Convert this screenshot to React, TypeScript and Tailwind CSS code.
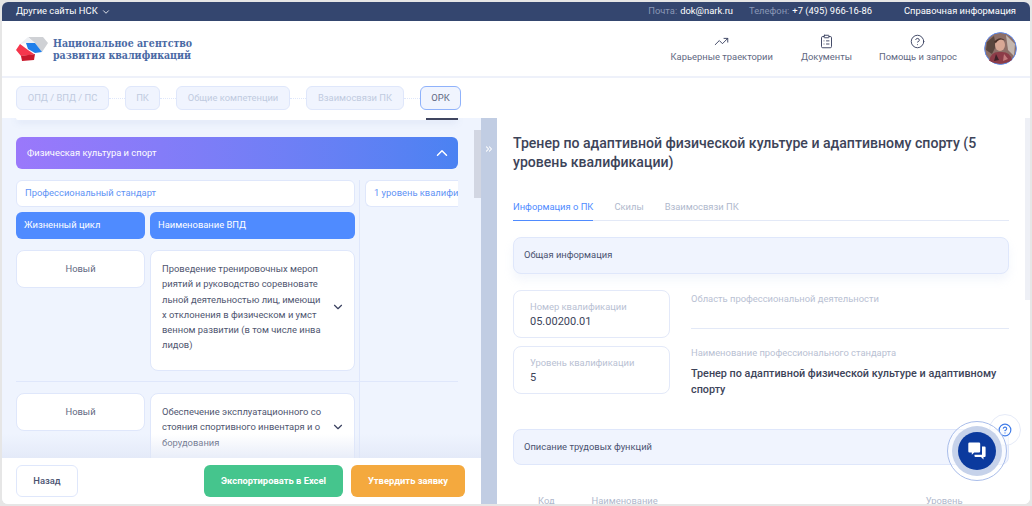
import { ChevronDown, ChevronUp, ChevronsRight, CircleHelp, ClipboardList, TrendingUp } from 'lucide-react'

const tabs = [
  { label: 'ОПД / ВПД / ПС', width: 'w-[93px]' },
  { label: 'ПК', width: 'w-[35px]' },
  { label: 'Общие компетенции', width: 'w-[114px]' },
  { label: 'Взаимосвязи ПК', width: 'w-[98px]' }
]

function Logo() {
  return (
    <svg width="32" height="26" viewBox="0 0 32 26">
      <polygon points="12,1 27,1 32,7 26,16 19,7" fill="#cfd1d5" />
      <polygon points="12,1 19,7 10,7 4,8" fill="#eef0f4" />
      <polygon points="10,7 19,7 26,16 19,17 12,13" fill="#1f7fea" />
      <polygon points="0,14 4,8 12,14 18,18 14,19 5,20" fill="#f5364c" />
      <polygon points="5,20 19,18 18,24 6,25" fill="#c9182c" />
    </svg>
  )
}

function Avatar() {
  return (
    <svg width="33" height="33" viewBox="0 0 33 33" className="rounded-full">
      <circle cx="16.5" cy="16.5" r="16" fill="#8d6f68" stroke="#5b8cf5" strokeWidth="1" />
      <path d="M22 3 L31 12 L30 24 L24 18 Z" fill="#c4b6ae" />
      <path d="M3 10 L10 4 L12 14 L8 22 L2 18 Z" fill="#5a463e" />
      <ellipse cx="16" cy="13" rx="5" ry="6" fill="#d8a896" />
      <path d="M10 10 Q16 3 22 9 L20 8 Q15 6 12 11 Z" fill="#4a3028" />
      <path d="M5 29 Q7 19 16 20 Q26 19 28 28 Q17 35 5 29 Z" fill="#8c3c48" />
      <path d="M12 22 L15 28 L10 29 Z" fill="#3e2228" />
      <path d="M20 22 L24 27 L19 29 Z" fill="#c27a7c" />
    </svg>
  )
}

function NavItem({ icon, label }: { icon: React.ReactNode; label: string }) {
  return (
    <div className="flex flex-col items-center gap-px text-[9.4px] leading-[14px] text-[#5f6882]">
      <span className="text-[#3a4160]">{icon}</span>
      <span>{label}</span>
    </div>
  )
}

function VpdRow({ text, rowHeight }: { text: string[]; rowHeight: string }) {
  return (
    <div className="flex gap-[5px]">
      <div className="w-[129px] h-[38px] shrink-0 bg-white border border-[#dfe7fb] rounded-lg flex items-center justify-center text-[9.4px] text-[#5f6882]">
        Новый
      </div>
      <div className={`w-[205px] ${rowHeight} shrink-0 bg-white border border-[#dfe7fb] rounded-lg pl-[11px] pr-[9px] pt-[10px]`}>
        <div className="flex items-center justify-between">
          <div className="text-[9.4px] leading-[15.3px] text-[#4f5670]">
            {text.map((line) => (
              <div key={line} className="whitespace-nowrap">{line}</div>
            ))}
          </div>
          <ChevronDown className="w-[14px] h-[14px] text-[#3a4160] shrink-0" />
        </div>
      </div>
    </div>
  )
}

export default function App() {
  return (
    <div className="w-[1032px] h-[506px] bg-[#e6e6e6] p-[2px] overflow-hidden" style={{ fontFamily: 'Roboto, sans-serif' }}>
      <div className="relative w-[1028px] h-[502px] bg-white rounded-[6px] overflow-hidden flex flex-col">
        {/* top strip */}
        <div className="h-[19px] shrink-0 bg-[#34466f] flex items-center pl-[14px] pr-[14px] text-[9.4px] text-white">
          <span>Другие сайты НСК</span>
          <ChevronDown className="w-[10px] h-[10px] ml-[3px]" />
          <span className="ml-auto text-[#8a97b5]">Почта:</span>
          <span className="ml-[3px]">dok@nark.ru</span>
          <span className="ml-[16px] text-[#8a97b5]">Телефон:</span>
          <span className="ml-[3px]">+7 (495) 966-16-86</span>
          <span className="ml-[32px]">Справочная информация</span>
        </div>

        {/* header */}
        <div className="h-[57px] shrink-0 bg-white border-b-2 border-[#eef1fa] flex items-center pl-[14px] pr-[13px]">
          <Logo />
          <div className="ml-[5px] text-[10.5px] leading-[12px] font-bold text-[#4a6aa5]" style={{ fontFamily: '"DejaVu Serif Condensed", "DejaVu Serif", serif' }}>
            <div>Национальное агентство</div>
            <div>развития квалификаций</div>
          </div>
          <div className="ml-auto flex items-center">
            <NavItem icon={<TrendingUp className="w-[15px] h-[15px]" strokeWidth={1.5} />} label="Карьерные траектории" />
            <div className="ml-[28px]">
              <NavItem icon={<ClipboardList className="w-[15px] h-[15px]" strokeWidth={1.5} />} label="Документы" />
            </div>
            <div className="ml-[27px]">
              <NavItem icon={<CircleHelp className="w-[15px] h-[15px]" strokeWidth={1.5} />} label="Помощь и запрос" />
            </div>
            <div className="ml-[27px]">
              <Avatar />
            </div>
          </div>
        </div>

        {/* steps */}
        <div className="h-[40px] shrink-0 bg-white flex items-center pl-[14px]">
          {tabs.map((tab) => (
            <div key={tab.label} className="flex items-center">
              <div className={`${tab.width} h-[24px] bg-[#f0f4fe] border border-[#dfe7fb] rounded-md flex items-center justify-center text-[9.4px] text-[#c0cbe0] whitespace-nowrap`}>
                {tab.label}
              </div>
              <div className="w-[16px] border-t border-dotted border-[#dfe7fb]" />
            </div>
          ))}
          <div className="w-[41px] h-[24px] bg-[#f0f4fe] border border-[#8fb2fb] rounded-md flex items-center justify-center text-[9.4px] text-[#5f6882]">
            ОРК
          </div>
        </div>

        {/* body */}
        <div className="flex-1 flex min-h-0">
          {/* left panel */}
          <div className="w-[479px] shrink-0 flex flex-col bg-[#eff4fe]">
            <div className="relative flex-1 min-h-0 overflow-hidden pl-[14px]">
              <div className="w-[442px] h-[2px] bg-white rounded-b-md shadow-[0_2px_6px_rgba(120,140,190,0.25)] relative">
                <div className="absolute right-0 top-0 w-[32px] h-[2px] bg-[#3f4560]" />
              </div>
              <div className="absolute right-0 top-[12px] w-[7px] h-[68px] bg-[#d2d6e2]" />

              <div className="mt-[17px] w-[442px] h-[32px] rounded-md bg-gradient-to-r from-[#9a78fb] to-[#4a82f2] flex items-center justify-between pl-[11px] pr-[7px] text-[9.4px] text-white">
                <span>Физическая культура и спорт</span>
                <ChevronUp className="w-[18px] h-[18px]" strokeWidth={2} />
              </div>

              <div className="mt-[11px] w-[442px] flex">
                <div className="w-[339px] shrink-0">
                  <div className="h-[27px] bg-white border border-[#dfe7fb] rounded-md flex items-center pl-[8px] text-[9.4px] text-[#5f93f5]">
                    Профессиональный стандарт
                  </div>
                  <div className="mt-[5px] flex gap-[5px]">
                    <div className="w-[129px] h-[27px] bg-[#4f8bff] rounded-md flex items-center pl-[8px] text-[9.4px] text-white">Жизненный цикл</div>
                    <div className="w-[205px] h-[27px] bg-[#4f8bff] rounded-md flex items-center pl-[8px] text-[9.4px] text-white">Наименование ВПД</div>
                  </div>
                  <div className="mt-[11px]">
                    <VpdRow
                      rowHeight="h-[121px]"
                      text={[
                        'Проведение тренировочных мероп',
                        'риятий и руководство соревновате',
                        'льной деятельностью лиц, имеющи',
                        'х отклонения в физическом и умст',
                        'венном развитии (в том числе инва',
                        'лидов)'
                      ]}
                    />
                  </div>
                  <div className="mt-[10px] h-px w-[442px] bg-[#dfe7fb]" />
                  <div className="mt-[11px]">
                    <VpdRow
                      rowHeight="h-[90px]"
                      text={['Обеспечение эксплуатационного со', 'стояния спортивного инвентаря и о', 'борудования']}
                    />
                  </div>
                </div>
                <div className="w-px h-[320px] ml-[4px] shrink-0 bg-[#dfe7fb]" />
                <div className="ml-[5px] w-[93px] h-[27px] overflow-hidden bg-white border border-r-0 border-[#dfe7fb] rounded-l-md flex items-center pl-[8px] text-[9.4px] text-[#5f93f5] whitespace-nowrap">
                  1 уровень квалификации
                </div>
              </div>

              <div className="absolute left-0 right-0 bottom-0 h-[24px] bg-gradient-to-b from-transparent to-[#dfe6f6]/70" />
            </div>

            <div className="h-[46px] shrink-0 bg-white flex items-center pl-[14px] pr-[16px]">
              <div className="w-[62px] h-[32px] border border-[#dfe7fb] rounded-md flex items-center justify-center text-[9.4px] font-medium text-[#4a5270]">
                Назад
              </div>
              <div className="ml-auto w-[139px] h-[32px] rounded-md bg-[#45c58d] flex items-center justify-center text-[9.4px] font-bold text-white">
                Экспортировать в Excel
              </div>
              <div className="ml-[8px] w-[114px] h-[32px] rounded-md bg-[#f4a93e] flex items-center justify-center text-[9.4px] font-bold text-white">
                Утвердить заявку
              </div>
            </div>
          </div>

          {/* splitter */}
          <div className="w-[16px] shrink-0 bg-[#c1cde3] pt-[26px] flex justify-center">
            <ChevronsRight className="w-[10px] h-[10px] text-white" strokeWidth={2.5} />
          </div>

          {/* right panel */}
          <div className="relative flex-1 min-w-0 overflow-hidden bg-white pl-[16px] pr-[21px] pt-[16px]">
            <div className="absolute right-0 top-0 w-[5px] h-[182px] bg-[#eef0f6]" />
            <h1 className="text-[14.1px] leading-[19px] font-medium text-[#3d4459]">
              Тренер по адаптивной физической культуре и адаптивному спорту (5 уровень квалификации)
            </h1>

            <div className="mt-[24px] h-[25px] border-b border-[#e3e9f7] flex gap-[21px] text-[9.4px] leading-[21px] text-[#b0b9cd]">
              <div className="h-[25px] border-b border-[#4f8bff] text-[#4f8bff]">Информация о ПК</div>
              <div>Скилы</div>
              <div>Взаимосвязи ПК</div>
            </div>

            <div className="mt-[16px] h-[37px] bg-[#f0f4fe] border border-[#dfe7fb] rounded-lg shadow-[0_6px_10px_rgba(190,205,240,0.18)] flex items-center pl-[10px] text-[9.4px] text-[#4a5270]">
              Общая информация
            </div>

            <div className="mt-[16px] flex gap-[21px]">
              <div className="w-[157px] shrink-0">
                <div className="h-[48px] border border-[#e3e9f9] rounded-lg pl-[16px] pt-[9px]">
                  <div className="text-[9.4px] leading-[14px] text-[#b9c1d3]">Номер квалификации</div>
                  <div className="text-[11px] leading-[16px] text-[#3d4459]">05.00200.01</div>
                </div>
                <div className="mt-[8px] h-[48px] border border-[#e3e9f9] rounded-lg pl-[16px] pt-[9px]">
                  <div className="text-[9.4px] leading-[14px] text-[#b9c1d3]">Уровень квалификации</div>
                  <div className="text-[11px] leading-[16px] text-[#3d4459]">5</div>
                </div>
              </div>
              <div className="flex-1 min-w-0">
                <div className="h-[39px] border-b border-[#e3e9f7] text-[9.4px] leading-[17px] text-[#b9c1d3]">
                  Область профессиональной деятельности
                </div>
                <div className="mt-[17px] text-[9.4px] leading-[14px] text-[#b9c1d3]">Наименование профессионального стандарта</div>
                <div className="mt-[6px] text-[10.8px] leading-[15.5px] font-medium text-[#3d4459]">
                  Тренер по адаптивной физической культуре и адаптивному спорту
                </div>
              </div>
            </div>

            <div className="mt-[32px] h-[36px] bg-[#f0f4fe] border border-[#dfe7fb] rounded-lg flex items-center pl-[10px] text-[9.4px] text-[#4a5270]">
              Описание трудовых функций
            </div>

            <div className="mt-[30px] flex text-[9.4px] leading-[12px] text-[#b0b9cd]">
              <span className="ml-[25px]">Код</span>
              <span className="ml-[37px]">Наименование</span>
              <span className="ml-[268px]">Уровень</span>
            </div>

            {/* floating help */}
            <div className="absolute left-[492px] top-[296px] w-[32px] h-[32px] rounded-full bg-white/60 border border-[#e6ebf8] flex items-center justify-center">
              <CircleHelp className="w-[14px] h-[14px] text-[#3f7be8]" />
            </div>
            <div className="absolute left-[450px] top-[303px] w-[60px] h-[60px] rounded-full border border-[#a9bdea] bg-white/50 flex items-center justify-center">
              <div className="w-[50px] h-[50px] rounded-full bg-[#c6d2ea] flex items-center justify-center">
                <div className="w-[38px] h-[38px] rounded-full bg-[#0b3a9e] flex items-center justify-center">
                  <svg width="18" height="18" viewBox="0 0 18 18" fill="#ffffff">
                    <path d="M1.5 0.5h9.5a1.2 1.2 0 0 1 1.2 1.2v7.6a1.2 1.2 0 0 1-1.2 1.2H6.2l-2.4 2.3v-2.3H1.5a1.2 1.2 0 0 1-1.2-1.2V1.7a1.2 1.2 0 0 1 1.2-1.2z" />
                    <path d="M14 4.5h2.6a1 1 0 0 1 1 1V14a1 1 0 0 1-1 1h-1.1v2.5L13 15H7.5a1 1 0 0 1-1-1v-1.2H14z" />
                  </svg>
                </div>
              </div>
            </div>
          </div>
        </div>
      </div>
    </div>
  )
}
